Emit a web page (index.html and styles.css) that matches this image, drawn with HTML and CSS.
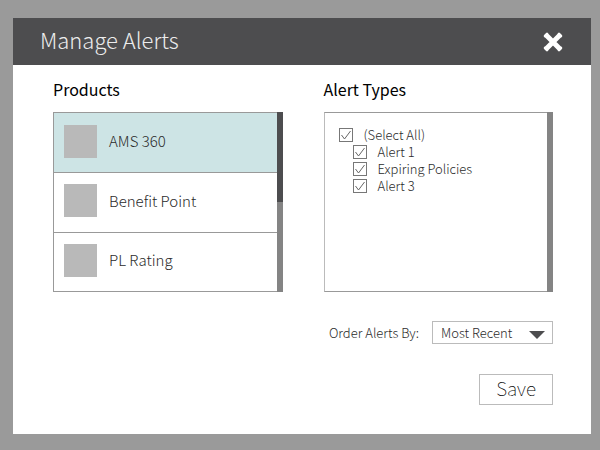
FILE: index.html
```html
<!DOCTYPE html>
<html lang="en">
<head>
<meta charset="utf-8">
<title>Manage Alerts</title>
<link rel="stylesheet" href="styles.css">
</head>
<body>
<main class="dialog">
  <header class="dialog-header">
    <h1 class="dialog-title">Manage Alerts</h1>
    <button class="close" type="button" aria-label="Close">
      <svg width="22" height="22" viewBox="0 0 22 22"><path d="M3.8 3.8L18.2 18.2M18.2 3.8L3.8 18.2" stroke="#fff" stroke-width="5"/><path d="M3 5L5 3M17 3L19 5M19 17L17 19M5 19L3 17" stroke="#fff" stroke-width="2.6" stroke-linecap="round"/></svg>
    </button>
  </header>
  <div class="dialog-body">
    <div class="columns">
      <section class="column">
        <h2 class="column-title">Products</h2>
        <div class="panel">
          <ul class="products">
            <li class="product selected"><span class="thumb"></span>AMS 360</li>
            <li class="product"><span class="thumb"></span>Benefit Point</li>
            <li class="product"><span class="thumb"></span>PL Rating</li>
          </ul>
          <div class="track"><div class="thumb-bar"></div></div>
        </div>
      </section>
      <section class="column">
        <h2 class="column-title">Alert Types</h2>
        <div class="panel">
          <div class="alerts">
            <label class="option"><input class="tick" type="checkbox" checked>(Select All)</label>
            <div class="suboptions">
              <label class="option"><input class="tick" type="checkbox" checked>Alert 1</label>
              <label class="option"><input class="tick" type="checkbox" checked>Expiring Policies</label>
              <label class="option"><input class="tick" type="checkbox" checked>Alert 3</label>
            </div>
          </div>
          <div class="track"></div>
        </div>
      </section>
    </div>
    <div class="order">
      <label for="order">Order Alerts By:</label>
      <select class="order-select" id="order"><option>Most Recent</option></select>
    </div>
    <div class="actions"><button class="save" type="button">Save</button></div>
  </div>
</main>
</body>
</html>
```
FILE: styles.css
```css
* {
  box-sizing: border-box;
}

body {
  margin: 0;
  min-height: 100vh;
  padding: 18px 9px 16px 13px;
  display: flex;
  background: #9a9a9a;
  color: #2b2b2b;
  font-family: "Noto Sans CJK SC", "Noto Sans", sans-serif;
  font-weight: 300;
}

.dialog {
  flex: 1;
  background: #fff;
}

.dialog-header {
  display: flex;
  align-items: center;
  justify-content: space-between;
  height: 47px;
  padding: 0 27px;
  background: #4d4d4f;
}

.dialog-title {
  margin: 0 0 5px;
  color: #ececec;
  font-size: 22px;
  line-height: 32px;
  font-weight: 300;
}

.close {
  display: flex;
  padding: 0;
  border: 0;
  background: none;
}

.dialog-body {
  padding: 11px 38px 29px 40px;
}

.columns {
  display: grid;
  grid-template-columns: 1fr 1fr;
  gap: 41px;
}

.column-title {
  margin: 0 0 9px;
  color: #000;
  font-size: 16px;
  line-height: 27px;
  font-weight: 400;
}

.panel {
  display: flex;
  height: 180px;
}

.products,
.alerts {
  flex: 1;
  margin: 0;
  border: 1px solid #999;
  border-right: 0;
}

.alerts {
  border-left-color: #bbb;
}

.products {
  display: grid;
  grid-template-rows: repeat(3, 1fr);
  padding: 0;
  list-style: none;
}

.product {
  display: flex;
  align-items: center;
  gap: 12px;
  padding: 0 10px 3px;
  font-size: 15px;
  line-height: 20px;
}

.product + .product {
  border-top: 1px solid #999;
}

.selected {
  background: #cde4e5;
}

.thumb {
  width: 33px;
  height: 33px;
  background: #b9b9b9;
}

.track {
  width: 6px;
  background: #848484;
}

.thumb-bar {
  height: 50%;
  background: #4d4d4f;
}

.alerts {
  padding: 13px 14px;
  font-size: 13px;
}

.option {
  display: flex;
  align-items: center;
  gap: 11px;
  line-height: 17px;
}

.suboptions {
  padding-left: 14px;
}

.tick {
  appearance: none;
  width: 14px;
  height: 14px;
  margin: 0;
  border: 1px solid #777;
  background: url("data:image/svg+xml,%3Csvg xmlns='http://www.w3.org/2000/svg' viewBox='0 0 12 12'%3E%3Cpath d='M1.5 6L4.5 10L10.5 2' fill='none' stroke='%23666'/%3E%3C/svg%3E");
}

.order {
  display: flex;
  align-items: center;
  justify-content: flex-end;
  gap: 13px;
  margin-top: 29px;
  font-size: 13px;
}

.order-select {
  appearance: none;
  width: 121px;
  height: 23px;
  padding: 0 8px;
  border: 1px solid #bbb;
  border-radius: 0;
  color: inherit;
  font: inherit;
  background: url("data:image/svg+xml,%3Csvg xmlns='http://www.w3.org/2000/svg' width='16' height='8'%3E%3Cpath d='M0 0H16L8 8Z' fill='%234d4d4f'/%3E%3C/svg%3E") no-repeat right 7px bottom 4px #fff;
}

.actions {
  display: flex;
  justify-content: flex-end;
  margin-top: 30px;
}

.save {
  height: 31px;
  padding: 0 16px 5px;
  border: 1px solid #bbb;
  background: #fff;
  color: #000;
  font-family: inherit;
  font-size: 19px;
  font-weight: 100;
  line-height: 25px;
}
```
